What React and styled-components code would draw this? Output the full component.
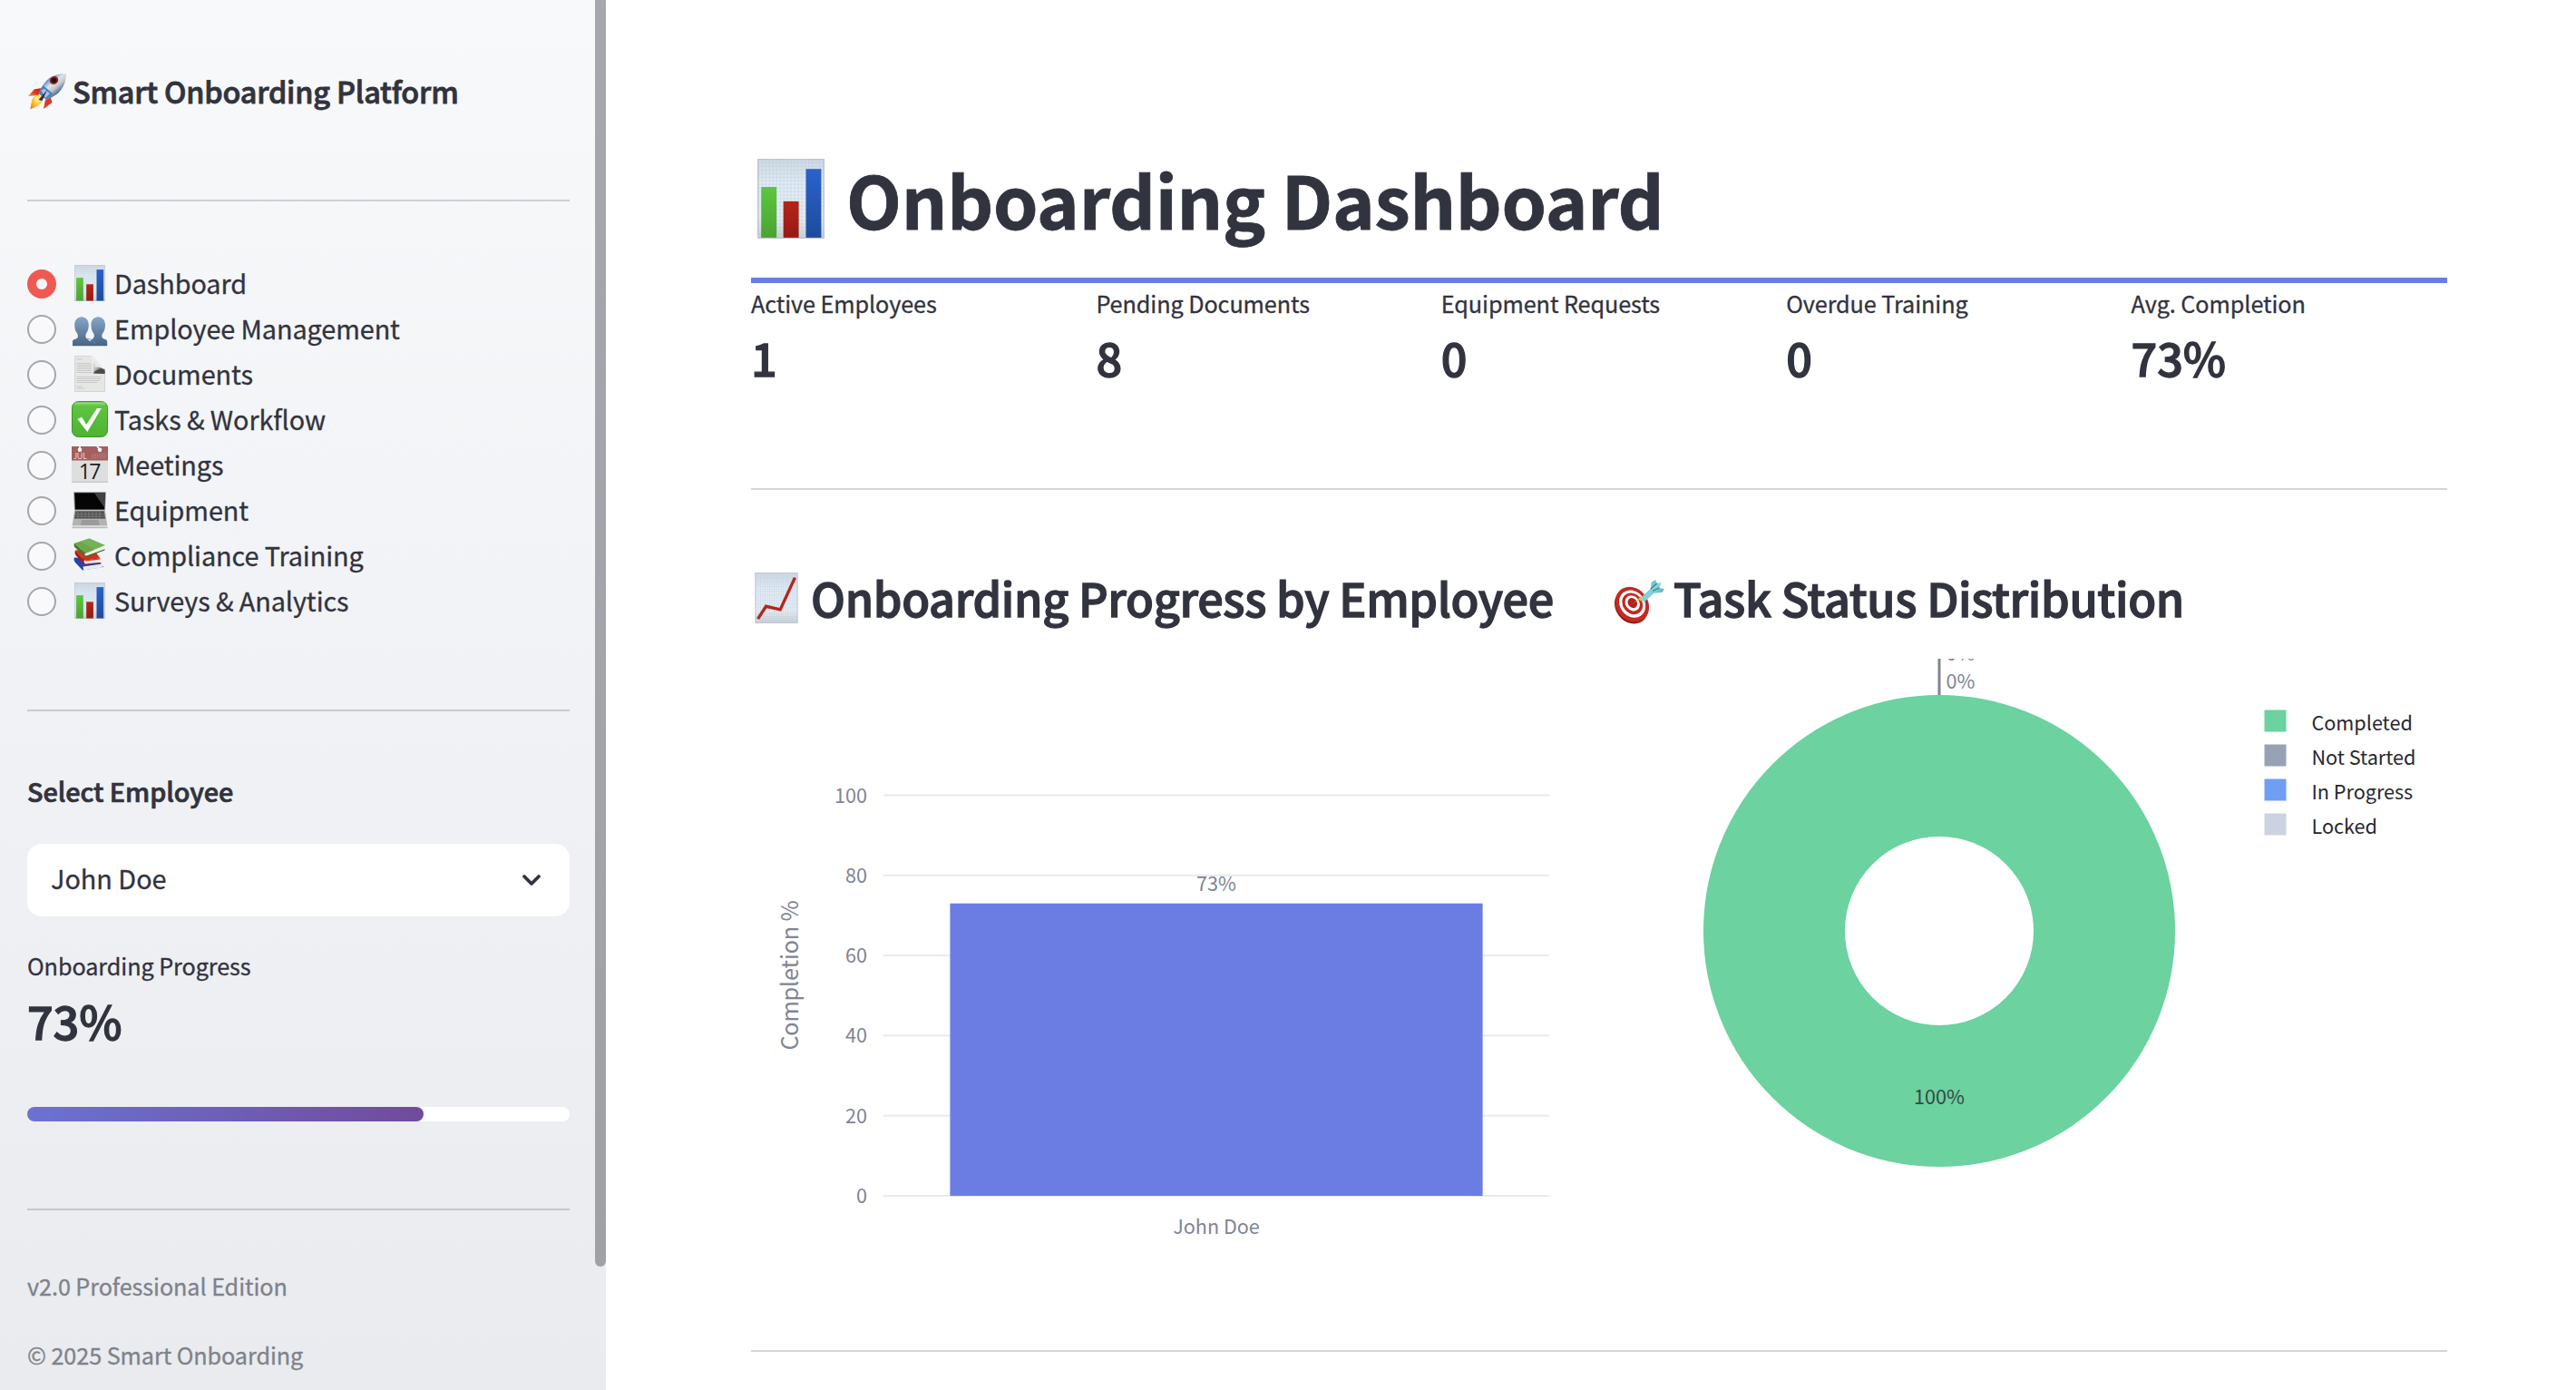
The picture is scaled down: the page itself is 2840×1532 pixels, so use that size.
import React from "react";
import styled, { createGlobalStyle, css } from "styled-components";

const FONT = '"Noto Sans CJK SC", "Noto Sans", sans-serif';
const INK = "#31333e";

const GlobalStyle = createGlobalStyle`
  *, *::before, *::after { box-sizing: border-box; }
  html, body { margin: 0; background: #fff; }
  body {
    font-family: ${FONT};
    color: ${INK};
    overflow: hidden;
    -webkit-font-smoothing: antialiased;
  }
`;

const regular = css`
  font-weight: 400;
  -webkit-text-stroke: 0.3px currentColor;
`;

const semibold = css`
  font-weight: 500;
  -webkit-text-stroke: 0.026em currentColor;
`;

const Page = styled.div`
  display: flex;
  width: 2840px;
  height: 1532px;
  overflow: hidden;
`;

/* ---------- Sidebar ---------- */

const Sidebar = styled.aside`
  display: flex;
  width: 668px;
  flex: none;
  background: linear-gradient(180deg, #f8f9fb 0%, #e9ebef 100%);
`;

const SidebarContent = styled.div`
  display: flex;
  flex-direction: column;
  width: 656px;
  padding: 78px 28px 0 30px;
`;

const ScrollThumb = styled.div`
  width: 12px;
  height: 1396px;
  border-radius: 0 0 6px 6px;
  background: linear-gradient(180deg, #a7a8ae, #a0a1a7);
`;

const Brand = styled.h3`
  display: flex;
  align-items: center;
  gap: 6px;
  height: 44px;
  margin: 0 0 98px;
  font-size: 32.4px;
  line-height: 44px;
  letter-spacing: -0.19px;
  white-space: nowrap;
  ${semibold}
`;

const Divider = styled.hr`
  width: 100%;
  height: 2px;
  flex: none;
  margin: 0;
  border: 0;
  background: ${(p) => (p.$light ? "#d5d6d8" : "rgba(49, 51, 63, 0.2)")};
`;

const NavList = styled.div`
  display: flex;
  flex-direction: column;
  margin: 66px 0 94px;
`;

const NavItem = styled.label`
  display: flex;
  align-items: center;
  height: 50px;
`;

const Radio = styled.span`
  display: flex;
  align-items: center;
  justify-content: center;
  width: 32px;
  height: 32px;
  margin-right: 17px;
  border-radius: 50%;
  border: 2px solid ${(p) => (p.$on ? "#ee5a53" : "#a5a6ac")};
  background: ${(p) => (p.$on ? "#ee5a53" : "#f9f9fb")};

  &::after {
    content: "";
    width: 12px;
    height: 12px;
    border-radius: 50%;
    background: ${(p) => (p.$on ? "#f5f5f8" : "transparent")};
  }
`;

const NavLabel = styled.span`
  display: flex;
  align-items: center;
  gap: 7px;
  height: 40px;
  margin-bottom: 2px;
  font-size: 28.8px;
  line-height: 40px;
  letter-spacing: -0.08px;
  white-space: nowrap;
  ${regular}
`;

const FieldTitle = styled.div`
  height: 48px;
  margin-top: 64px;
  font-size: 28.8px;
  line-height: 48px;
  letter-spacing: -0.05px;
  ${semibold}
`;

const SelectBox = styled.div`
  display: flex;
  align-items: center;
  justify-content: space-between;
  width: 598px;
  height: 80px;
  margin-top: 34px;
  padding: 0 30px 0 26px;
  border-radius: 16px;
  background: #fff;
  font-size: 28.8px;
  line-height: 40px;
  ${regular}
`;

const SelectValue = styled.span`
  margin-bottom: 4px;
`;

const SmallText = styled.div`
  height: 42px;
  margin-top: ${(p) => p.$top || 0}px;
  color: ${(p) => (p.$muted ? "#808289" : INK)};
  font-size: 25.2px;
  line-height: 42px;
  letter-spacing: -0.07px;
  white-space: nowrap;
  ${regular}
`;

const BigValue = styled.div`
  height: 68px;
  margin-top: ${(p) => p.$top || 0}px;
  font-size: 50.4px;
  line-height: 68px;
  letter-spacing: -0.1px;
  ${semibold}
`;

const Track = styled.div`
  width: 598px;
  height: 16px;
  margin: 61px 0 96px;
  border-radius: 8px;
  background: #fff;
`;

const TrackFill = styled.div`
  height: 16px;
  border-radius: 8px;
  background: linear-gradient(90deg, #6b72d4, #714b9b);
`;

/* ---------- Main ---------- */

const Main = styled.main`
  display: flex;
  flex-direction: column;
  width: 2172px;
  padding: 165px 142px 0 160px;
`;

const Title = styled.h1`
  display: flex;
  align-items: center;
  gap: 17px;
  height: 147px;
  margin: 0;
  padding-bottom: 34px;
  border-bottom: 6px solid #6b7de3;
  font-size: 79.2px;
  font-weight: 700;
  line-height: 106px;
  letter-spacing: -0.27px;
  white-space: nowrap;
  -webkit-text-stroke: 0.8px currentColor;
`;

const EmojiShift = styled.span`
  display: flex;
  margin-top: ${(p) => p.$y}px;
`;

const Metrics = styled.section`
  display: grid;
  grid-template-columns: repeat(5, 1fr);
  gap: 32px;
  height: 226px;
`;

const Columns = styled.section`
  display: grid;
  grid-template-columns: 1fr 1fr;
  gap: 32px;
  height: 948px;
  padding-top: 85px;
`;

const Panel = styled.div`
  display: flex;
  flex-direction: column;
`;

const PanelTitle = styled.h2`
  display: flex;
  align-items: center;
  gap: 10px;
  height: 68px;
  margin: 0 0 33px;
  font-size: 50.4px;
  line-height: 68px;
  letter-spacing: -0.33px;
  white-space: nowrap;
  ${semibold}
`;

const Chart = styled.svg`
  display: block;
  width: 919px;
  height: 700px;
  font-family: ${FONT};
  overflow: hidden;
`;

const Glyph = styled.svg`
  display: block;
  flex: none;
  overflow: visible;
  -webkit-text-stroke: 0;
`;

/* ---------- Pictograms ---------- */

function Paper({ id }) {
  return (
    <>
      <defs>
        <linearGradient id={id} x1="0" y1="0" x2="0" y2="1">
          <stop offset="0" stopColor="#cfd8e0" />
          <stop offset="0.3" stopColor="#e2ebf4" />
          <stop offset="0.75" stopColor="#e8edf1" />
          <stop offset="1" stopColor="#c8ced3" />
        </linearGradient>
        <pattern id={id + "g"} width="1.8" height="1.8" patternUnits="userSpaceOnUse">
          <path d="M0 0H1.8M0 0V1.8" stroke="#b4cce0" strokeWidth="0.5" />
        </pattern>
      </defs>
      <rect x="3.2" y="0" width="33.6" height="40" fill={`url(#${id})`} />
      <rect x="3.2" y="0" width="33.6" height="40" fill={`url(#${id}g)`} opacity="0.8" />
      <rect x="3.5" y="0.3" width="33" height="39.4" fill="none" stroke="#bcc6ce" strokeWidth="0.6" />
    </>
  );
}

function BarsIcon({ id }) {
  return (
    <>
      <defs>
        <linearGradient id={id + "a"} x1="0" y1="0" x2="0" y2="1"><stop offset="0" stopColor="#5dc63f" /><stop offset="1" stopColor="#4aa331" /></linearGradient>
        <linearGradient id={id + "b"} x1="0" y1="0" x2="0" y2="1"><stop offset="0" stopColor="#b3261a" /><stop offset="1" stopColor="#981a12" /></linearGradient>
        <linearGradient id={id + "c"} x1="0" y1="0" x2="0" y2="1"><stop offset="0" stopColor="#2a62cb" /><stop offset="1" stopColor="#1f4b9c" /></linearGradient>
      </defs>
      <Paper id={id} />
      <rect x="5.1" y="14.1" width="7.7" height="25.4" fill={`url(#${id}a)`} />
      <rect x="16.2" y="21.3" width="7.7" height="18.2" fill={`url(#${id}b)`} />
      <rect x="27.5" y="5.1" width="7.7" height="34.4" fill={`url(#${id}c)`} />
    </>
  );
}

function TrendIcon({ id }) {
  return (
    <>
      <Paper id={id} />
      <path d="M5.4 36.5L11.8 26.6L23 29.2L34.6 4" fill="none" stroke="#b5251b" strokeWidth="2.4" />
    </>
  );
}

function PeopleIcon() {
  const body =
    "M11 1C15.6 1 18.8 4.5 18.8 10C18.8 14.5 17.4 17.5 15.8 19.5C15.2 21.5 15.3 23 16 24.2C17.5 26 20.5 26.5 20.5 30V33H1V28.5C1 25 5 26 6.5 24C7 22.5 7 21 6.3 19.5C4.5 17.5 3.2 14.5 3.2 10C3.2 4.5 6.4 1 11 1Z";
  return (
    <>
      <defs>
        <linearGradient id="people" x1="0" y1="0" x2="0" y2="1">
          <stop offset="0" stopColor="#86a6c4" />
          <stop offset="1" stopColor="#466486" />
        </linearGradient>
      </defs>
      <g fill="url(#people)">
        <path d={body} transform="translate(0 6.3)" />
        <path d={body} transform="translate(40.2 6.3) scale(-1 1)" />
      </g>
      <path d="M17 31C21 31.5 24.5 33.5 26 37" fill="none" stroke="#6d8cab" strokeWidth="0.8" />
    </>
  );
}

function DocumentIcon() {
  return (
    <>
      <defs>
        <linearGradient id="docfold" x1="0" y1="0.3" x2="1" y2="0.9">
          <stop offset="0.2" stopColor="#ececec" />
          <stop offset="0.55" stopColor="#a9a9a9" />
          <stop offset="0.85" stopColor="#3c3c3c" />
        </linearGradient>
      </defs>
      <path d="M3.5 0.5H22L36.5 19V39.5H3.5Z" fill="#e6e6e5" stroke="#c9c9c9" strokeWidth="0.7" />
      <path d="M5.5 4H11.5M5.5 8.5H21M5.5 10.5H22M5.5 12.5H22M5.5 14.5H22M5.5 16.5H22M5.5 18.5H23M5.5 23.5H32.5M5.5 25.5H32.5M5.5 27.5H31M5.5 29.5H28M5.5 34H11M5.5 36H14" stroke="#c9c9c9" strokeWidth="1" />
      <path d="M20 0.5C24 4 24.5 12 24 19.5H36.5V16C32 13.5 26 4 23.5 0.5Z" fill="url(#docfold)" />
      <path d="M24 19.5C25.5 16.5 29 14 36.3 14.5L36.5 20Z" fill="#4b4b4b" />
      <path d="M23 1.5C25.5 5 26 9 25.8 12.5C29 12 33 13 36.3 15.5C32 10 27 5 23 1.5Z" fill="#e9e9e8" />
    </>
  );
}

function CheckIcon() {
  return (
    <>
      <defs>
        <linearGradient id="chk" x1="0" y1="0" x2="0" y2="1">
          <stop offset="0" stopColor="#56b83a" />
          <stop offset="0.2" stopColor="#5cc43e" />
          <stop offset="1" stopColor="#4fb232" />
        </linearGradient>
        <linearGradient id="chkgloss" x1="0" y1="0" x2="0" y2="1">
          <stop offset="0" stopColor="#a9e291" />
          <stop offset="1" stopColor="#5cc43e" stopOpacity="0" />
        </linearGradient>
      </defs>
      <rect x="0.5" y="0.5" width="39" height="39" rx="7" fill="url(#chk)" stroke="#3f932a" strokeWidth="1" />
      <rect x="2.5" y="1.5" width="35" height="6" rx="3" fill="url(#chkgloss)" />
      <path d="M6.5 20L11.2 17.5L16.2 26L28 8H32.8L17.3 34Z" fill="#fff" />
    </>
  );
}

const CalMonth = styled.text`
  font: 400 8.8px Lato, sans-serif;
  fill: #e9d4d4;
`;
const CalDay = styled.text`
  font: 400 23px "Open Sans", sans-serif;
  letter-spacing: -1.6px;
  fill: #1e1e1e;
`;

function CalendarIcon() {
  return (
    <>
      <rect x="0" y="0" width="40" height="40" fill="#dedede" />
      <rect x="0" y="38.5" width="40" height="1.5" fill="#cacaca" />
      <rect x="0" y="0" width="40" height="15.5" fill="#a45f5f" />
      <path d="M9 3V0M31 3L28 0" stroke="#fff" strokeWidth="1.6" />
      <circle cx="9" cy="3.8" r="2.3" fill="#fff" />
      <circle cx="31" cy="3.8" r="2.3" fill="#fff" />
      <path d="M22.5 8V13.5M24.5 8V13.5M26.5 8V13.5M28.5 8V13.5M31 7V13.5M33 7V13.5M35 7V13.5M37 7V13.5" stroke="#b98080" strokeWidth="0.8" />
      <CalMonth x="2.2" y="13.7">JUL</CalMonth>
      <CalDay x="19.3" y="35.5" textAnchor="middle">17</CalDay>
    </>
  );
}

function LaptopIcon() {
  return (
    <>
      <path d="M2.2 0.3H37.8L37 20.5H3Z" fill="#8c8c8c" />
      <path d="M3.2 1.2H36.8L36 19.5H4Z" fill="#050505" />
      <path d="M25 1.2H36.8L36.2 17.5Z" fill="#424242" />
      <path d="M3 20.5H37L39.3 37.5H0.7Z" fill="#b3b3b3" />
      <path d="M4.2 21.5H35.8L37 29.5H3Z" fill="#3e3e3e" />
      <path d="M3.8 23.6H36.2M3.5 25.6H36.5M3.3 27.6H36.7" stroke="#a8a8a8" strokeWidth="0.6" />
      <path d="M7 21.5V29.5M11 21.5V29.5M15 21.5V29.5M19 21.5V29.5M23 21.5V29.5M27 21.5V29.5M31 21.5V29.5" stroke="#999" strokeWidth="0.5" />
      <path d="M11 31H29.5L30.5 37H10Z" fill="#9b9b9b" />
      <path d="M0.5 37.3H39.5V39.5H0.5Z" fill="#d8d8d8" />
      <path d="M0.5 39.7H39.5" stroke="#9a9a9a" strokeWidth="0.7" />
    </>
  );
}

function BooksIcon() {
  return (
    <>
      <path d="M3 22.5C1.8 24.5 3 27 4.5 28.5L12 36.5L35 33L27 24Z" fill="#2344a8" />
      <path d="M12.5 32.5L33.5 29.5L34 33.5L13 36.6Z" fill="#e8ecf5" />
      <path d="M4 14.5L14 25.5L31.5 23.5L24 13Z" fill="#d5301f" />
      <path d="M4 14.5C3 17.5 3.8 19 5 20.5L14 30.4L32.6 29V27.9L15 29.5L14 25.5Z" fill="#a91d12" />
      <path d="M14 25.5L31.3 23.4L32.2 27.8L15 29.4C13.5 28.5 13.4 26.8 14 25.5Z" fill="#f1e9e6" />
      <path d="M15 25.3L31.3 23.2L31.5 24.6L15 26.6Z" fill="#d5301f" />
      <path d="M19.5 1.5L36.8 9L15 18L3 6.8Z" fill="#6aa84a" />
      <path d="M19.5 1.5L36.8 9L26 13.5L9 5Z" fill="#79b657" opacity="0.7" />
      <path d="M3 6.8C2.2 8.5 2.6 10 3.5 11.2L14.5 21.3C13.4 20.5 13.8 18.8 15 18Z" fill="#40782b" />
      <path d="M15 18L36.5 9.3L35.5 14L16.5 20.8C14.2 20.5 14 19.2 15 18Z" fill="#f0f0ec" />
      <path d="M14.500 20.8L16.8 20.6L36.5 13.2V14.6L16.5 22Z" fill="#3c7228" />
    </>
  );
}

function RocketIcon() {
  return (
    <Glyph width="44" height="42" viewBox="0 0 44 42">
      <defs>
        <linearGradient id="hull" x1="0.15" y1="0.1" x2="0.85" y2="0.9">
          <stop offset="0.2" stopColor="#5c8fd0" />
          <stop offset="0.42" stopColor="#dbe5ec" />
          <stop offset="0.6" stopColor="#c3c8c9" />
          <stop offset="0.8" stopColor="#4a6da3" />
        </linearGradient>
        <linearGradient id="fin" x1="0" y1="1" x2="1" y2="0">
          <stop offset="0" stopColor="#f4a04b" />
          <stop offset="0.45" stopColor="#e03a1c" />
          <stop offset="1" stopColor="#b02114" />
        </linearGradient>
        <radialGradient id="flame" cx="0.6" cy="0.3" r="0.8">
          <stop offset="0" stopColor="#fff4a8" />
          <stop offset="0.5" stopColor="#fbc531" />
          <stop offset="1" stopColor="#ea7b22" />
        </radialGradient>
      </defs>
      <path d="M1 27L8 19.3L17 18L12.5 26Z" fill="url(#fin)" />
      <path d="M20 31L26 28.5L27.5 34L18 41Z" fill="#de3a20" />
      <path d="M3.3 41.5L5.3 30.5C7 27.5 10 25.5 13 25.5L17.5 29.5C17 33 14.5 36 12 37.5Z" fill="url(#flame)" />
      <path d="M43 2C43 9 41 16 36 21.5C32 26 26 29.5 20.5 30.5L13 24.5C15 18 18 12 24 7.5C30 3.5 36 2 43 2Z" fill="url(#hull)" />
      <path d="M13 24.5C14 21 15.5 18 17.5 15L28.5 24.5C26 27.5 23 29.7 20.5 30.5Z" fill="#4f7fbd" />
      <path d="M15.3 20.5L19 19L25 24L20 29Z" fill="#b9cfe2" opacity="0.85" />
      <path d="M22 20L12.5 31L16.5 32Z" fill="#2b2f46" />
      <ellipse cx="29.5" cy="9.5" rx="4.9" ry="4.4" fill="#a51c17" transform="rotate(-35 29.5 9.5)" />
      <ellipse cx="29.5" cy="9.5" rx="3" ry="2.7" fill="#1d1418" />
    </Glyph>
  );
}

function TargetIcon() {
  return (
    <Glyph width="56" height="56" viewBox="0 0 56 56">
      <defs>
        <linearGradient id="flight" x1="0" y1="0" x2="1" y2="1">
          <stop offset="0" stopColor="#4fa5b0" />
          <stop offset="0.5" stopColor="#84d5dd" />
          <stop offset="1" stopColor="#3f8f9b" />
        </linearGradient>
      </defs>
      <g transform="rotate(-38 20 34.5)">
        <ellipse cx="18.8" cy="35.5" rx="17.5" ry="20.5" fill="#8f1d17" />
        <ellipse cx="20.5" cy="34.5" rx="17.5" ry="20.5" fill="#c22a22" />
        <ellipse cx="21" cy="34.2" rx="13.5" ry="16" fill="#fff" />
        <ellipse cx="21.3" cy="34" rx="10.6" ry="12.6" fill="#c22a22" />
        <ellipse cx="21.6" cy="33.7" rx="7.6" ry="9" fill="#fff" />
        <ellipse cx="21.8" cy="33.5" rx="4.9" ry="5.8" fill="#b3231c" />
      </g>
      <path d="M22 32.5L29 26.5L28.5 25L31 26L34 30L30 30.5L28 29Z" fill="#edbb2c" />
      <path d="M30.3 26.3L40.8 17L41.7 9.7L46.3 7L47.7 11L52.7 9.9L50.3 15.7L56 17.3L53.3 21L44.3 21.8L34.3 31L31 30Z" fill="url(#flight)" />
      <path d="M40.8 17L47.7 11M43 19.5L50.3 15.7" stroke="#347e8a" strokeWidth="1.2" />
    </Glyph>
  );
}

const ICONS = {
  bars: BarsIcon,
  trend: TrendIcon,
  people: PeopleIcon,
  document: DocumentIcon,
  check: CheckIcon,
  calendar: CalendarIcon,
  laptop: LaptopIcon,
  books: BooksIcon,
};

function Emoji({ name, id, size = 40 }) {
  const Icon = ICONS[name];
  return (
    <Glyph width={size} height={size} viewBox="0 0 40 40">
      <Icon id={id} />
    </Glyph>
  );
}

/* ---------- Charts ---------- */

const Tick = styled.text`
  font-size: 21.6px;
  fill: #808495;
  -webkit-text-stroke: 0.25px #808495;
`;
const AxisTitle = styled.text`
  font-size: 25.2px;
  fill: #808495;
  letter-spacing: -0.15px;
  -webkit-text-stroke: 0.3px #808495;
`;
const SliceLabel = styled.text`
  font-size: 21.6px;
  fill: #3a4743;
  -webkit-text-stroke: 0.25px #3a4743;
`;
const LegendText = styled.text`
  font-size: 21.6px;
  fill: #262730;
  -webkit-text-stroke: 0.25px #262730;
`;

const TICKS = [0, 20, 40, 60, 80, 100];
const yOf = (v) => 592 - v * 4.415;

function ProgressChart() {
  return (
    <Chart viewBox="0 0 919 700">
      {TICKS.map((v) => (
        <g key={v}>
          <rect x="146" y={yOf(v) - 1} width="734" height="2" fill="#e6eaf1" />
          <Tick x="128" y={yOf(v) + 8} textAnchor="end">{v}</Tick>
        </g>
      ))}
      <rect x="219.4" y={yOf(73)} width="587.2" height={592 - yOf(73)} fill="#6b7de3" />
      <Tick x="513" y="255.5" textAnchor="middle">73%</Tick>
      <Tick x="513" y="634" textAnchor="middle">John Doe</Tick>
      <AxisTitle transform="translate(52 349) rotate(-90)" textAnchor="middle">Completion %</AxisTitle>
    </Chart>
  );
}

const LEGEND = [
  ["Completed", "#6bd2a0"],
  ["Not Started", "#98a2b6"],
  ["In Progress", "#6f9ff4"],
  ["Locked", "#ccd3df"],
];

function StatusChart() {
  return (
    <Chart viewBox="0 0 919 700">
      <circle cx="359" cy="300" r="182" fill="none" stroke="#6bd2a0" strokeWidth="156" />
      <rect x="357.5" y="0" width="3" height="40" fill="#808495" />
      <Tick x="366.5" y="2">0%</Tick>
      <Tick x="366.5" y="33">0%</Tick>
      <SliceLabel x="359" y="490.5" textAnchor="middle">100%</SliceLabel>
      {LEGEND.map(([label, color], i) => (
        <g key={label}>
          <rect x="717.5" y={56.5 + i * 38} width="24" height="24" fill={color} />
          <LegendText x="769.5" y={79.3 + i * 38}>{label}</LegendText>
        </g>
      ))}
    </Chart>
  );
}

/* ---------- Page ---------- */

const NAV = [
  ["bars", "Dashboard"],
  ["people", "Employee Management"],
  ["document", "Documents"],
  ["check", "Tasks & Workflow"],
  ["calendar", "Meetings"],
  ["laptop", "Equipment"],
  ["books", "Compliance Training"],
  ["bars", "Surveys & Analytics"],
];

const METRICS = [
  ["Active Employees", "1"],
  ["Pending Documents", "8"],
  ["Equipment Requests", "0"],
  ["Overdue Training", "0"],
  ["Avg. Completion", "73%"],
];

export default function App() {
  const progress = 73;
  return (
    <Page>
      <GlobalStyle />
      <Sidebar>
        <SidebarContent>
          <Brand>
            <RocketIcon />
            <span>Smart Onboarding Platform</span>
          </Brand>
          <Divider />
          <NavList>
            {NAV.map(([icon, label], i) => (
              <NavItem key={label}>
                <Radio $on={i === 0} />
                <NavLabel>
                  <Emoji name={icon} id={"nav" + i} />
                  <span>{label}</span>
                </NavLabel>
              </NavItem>
            ))}
          </NavList>
          <Divider />
          <FieldTitle>Select Employee</FieldTitle>
          <SelectBox>
            <SelectValue>John Doe</SelectValue>
            <Glyph width="24" height="18" viewBox="0 0 24 18">
              <path d="M4 5L12 13L20 5" fill="none" stroke={INK} strokeWidth="3.8" strokeLinecap="round" strokeLinejoin="round" />
            </Glyph>
          </SelectBox>
          <SmallText $top={33}>Onboarding Progress</SmallText>
          <BigValue $top={6}>{progress}%</BigValue>
          <Track>
            <TrackFill style={{ width: progress + "%" }} />
          </Track>
          <Divider />
          <SmallText $top={62} $muted>v2.0 Professional Edition</SmallText>
          <SmallText $top={34} $muted>© 2025 Smart Onboarding</SmallText>
        </SidebarContent>
        <ScrollThumb />
      </Sidebar>
      <Main>
        <Title>
          <EmojiShift $y={1}><Emoji name="bars" id="title" size={88} /></EmojiShift>
          <span>Onboarding Dashboard</span>
        </Title>
        <Metrics>
          {METRICS.map(([label, value]) => (
            <div key={label}>
              <SmallText $top={1}>{label}</SmallText>
              <BigValue $top={5}>{value}</BigValue>
            </div>
          ))}
        </Metrics>
        <Divider $light />
        <Columns>
          <Panel>
            <PanelTitle>
              <EmojiShift $y={0}><Emoji name="trend" id="trend" size={56} /></EmojiShift>
              <span>Onboarding Progress by Employee</span>
            </PanelTitle>
            <ProgressChart />
          </Panel>
          <Panel>
            <PanelTitle>
              <EmojiShift $y={2}><TargetIcon /></EmojiShift>
              <span>Task Status Distribution</span>
            </PanelTitle>
            <StatusChart />
          </Panel>
        </Columns>
        <Divider $light />
      </Main>
    </Page>
  );
}
